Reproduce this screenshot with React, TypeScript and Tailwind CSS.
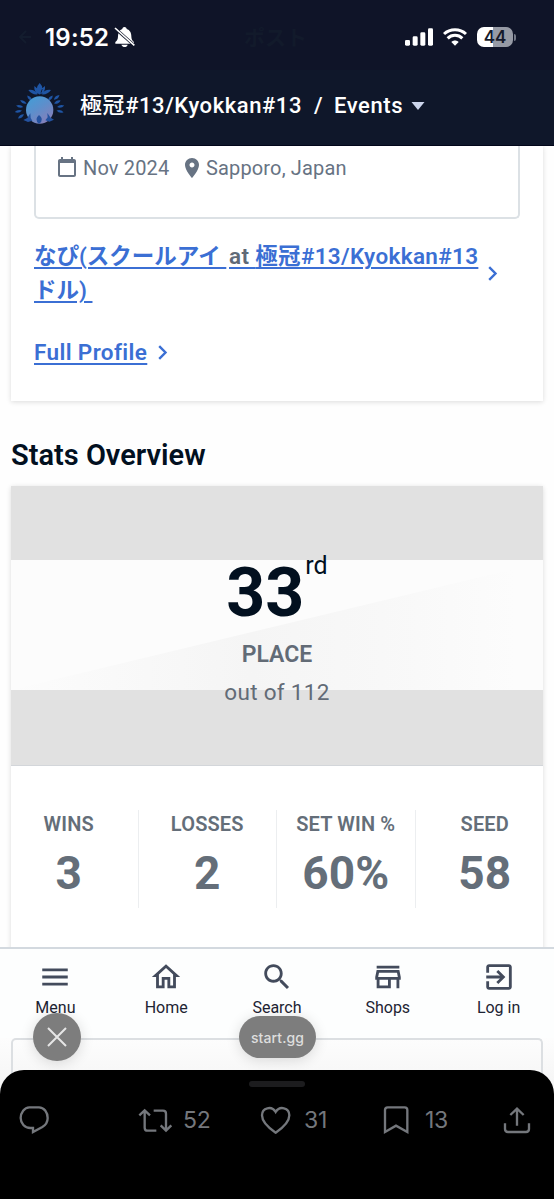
import React from 'react';

interface Stat {
  label: string;
  value: string;
}

interface NavItem {
  label: string;
  path: string;
}

const stats: Stat[] = [
  { label: 'WINS', value: '3' },
  { label: 'LOSSES', value: '2' },
  { label: 'SET WIN %', value: '60%' },
  { label: 'SEED', value: '58' },
];

const navItems: NavItem[] = [
  { label: 'Menu', path: 'M3 18h18v-2H3v2zm0-5h18v-2H3v2zm0-7v2h18V6H3z' },
  { label: 'Home', path: 'M12 5.69l5 4.5V18h-2v-6H9v6H7v-7.81l5-4.5M12 3L2 12h3v8h6v-6h2v6h6v-8h3L12 3z' },
  {
    label: 'Search',
    path: 'M15.5 14h-.79l-.28-.27C15.41 12.59 16 11.11 16 9.5 16 5.91 13.09 3 9.5 3S3 5.91 3 9.5 5.91 16 9.5 16c1.61 0 3.09-.59 4.23-1.57l.27.28v.79l5 4.99L20.49 19l-4.99-5zm-6 0C7.01 14 5 11.99 5 9.5S7.01 5 9.5 5 14 7.01 14 9.5 11.99 14 9.5 14z',
  },
  {
    label: 'Shops',
    path: 'M18.36 9l.6 3H5.04l.6-3h12.72M20 4H4v2h16V4zm0 3H4l-1 5v2h1v6h10v-6h4v6h2v-6h1v-2l-1-5zM6 18v-4h6v4H6z',
  },
  {
    label: 'Log in',
    path: 'M10.09 15.59L11.5 17l5-5-5-5-1.41 1.41L12.67 11H3v2h9.67l-2.58 2.59zM19 3H5c-1.11 0-2 .9-2 2v4h2V5h14v14H5v-4H3v4c0 1.1.89 2 2 2h14c1.1 0 2-.9 2-2V5c0-1.1-.9-2-2-2z',
  },
];

// x, y and tilt of each leaf around the orb
const leaves = [
  [65, 67, 48],
  [46, 78, 28],
  [35, 91, 12],
  [31, 106, -12],
  [39, 121, -35],
  [127, 67, -48],
  [146, 64, -40],
  [148, 78, -26],
  [158, 91, -12],
  [156, 106, 14],
];

const StatusBar: React.FC = () => (
  <div className="flex h-[70px] shrink-0 items-center bg-[#0f1428] pt-1 text-white">
    <svg className="ml-[17px] h-4 w-[14px]" viewBox="0 0 14 16" fill="none" stroke="#131c2e" strokeWidth="2">
      <path d="M9 2L3 8l6 6M3 8h11" />
    </svg>
    <span className="ml-[14px] w-[69px] pt-px font-['Inter',sans-serif] text-[24px] font-semibold tracking-[0.2px]">19:52</span>
    {/* Silent mode bell */}
    <svg className="h-[22px] w-[21px]" viewBox="0 0 63 66">
      <path
        fill="#fff"
        d="M31 3c5 0 7 3 7 6 10 3 14 12 14 22 0 9 3 13 8 17v5H4v-5c5-4 8-8 8-17 0-10 4-19 13-22 0-3 2-6 6-6zM22 56h19c-1 5-5 7-9 7s-8-2-10-7z"
      />
      <path stroke="#0f1428" strokeWidth="9" d="M4 8l57 50" />
      <path stroke="#fff" strokeWidth="5" d="M3 6l58 52" />
    </svg>
    <span className="ml-[109px] w-[66px] font-['Noto_Sans_CJK_JP',sans-serif] text-[21px] font-bold text-[#121a2b]">ポスト</span>
    <svg className="ml-[95px] h-[18px] w-7" viewBox="0 0 84 54" fill="#fff">
      <rect x="0" y="36" width="15" height="17" rx="4" />
      <rect x="23" y="25" width="15" height="28" rx="4" />
      <rect x="46" y="13" width="15" height="40" rx="4" />
      <rect x="69" y="1" width="15" height="52" rx="4" />
    </svg>
    <svg className="ml-[10px] h-[18px] w-6" viewBox="0 0 72 54" fill="none" stroke="#fff" strokeWidth="9">
      <path d="M3 18c18-17 48-17 66 0" />
      <path d="M14 31c12-12 32-12 44 0" />
      <path d="M25 42c6-6 16-6 22 0L36 53z" fill="#fff" stroke="none" />
    </svg>
    <div className="ml-[10px] flex h-5 w-9 items-center justify-center rounded-[7px] bg-[linear-gradient(90deg,#fff_44%,#969aa5_44%)] pt-px font-['Inter',sans-serif] text-[17px] font-semibold text-[#14192b]">
      44
    </div>
    <div className="ml-px h-[7px] w-[2px] rounded-r-full bg-[#747987]" />
  </div>
);

const TournamentLogo: React.FC = () => (
  <svg className="-mt-[5px] -ml-1 h-[54px] w-16" viewBox="0 0 192 162">
    <defs>
      <linearGradient id="orb" x1="0" y1="0" x2="0.7" y2="1">
        <stop offset="0" stopColor="#3f9fd8" />
        <stop offset="0.5" stopColor="#5c8fcc" />
        <stop offset="1" stopColor="#867fb9" />
      </linearGradient>
    </defs>
    <g fill="#1f55a4">
      {leaves.map(([x, y, tilt]) => (
        <path key={`${x}-${y}`} transform={`translate(${x} ${y}) rotate(${tilt})`} d="M-11 0Q0-8 11 0Q0 8-11 0z" />
      ))}
      <path d="M95 21q17 17 0 35q-17-18 0-35zM79 30q13 8 13 25q-15-8-13-25zM111 30q-13 8-13 25q15-8 13-25zM61 42q18-3 28 13q-17 2-28-13zM129 42q-18-3-28 13q17 2 28-13z" />
    </g>
    <circle cx="95" cy="102" r="41" fill="url(#orb)" />
    <path fill="#24529f" d="M93 117q18 14 0 26q-16-12 0-26zM67 112l1 14 5 8-13 4-14-6 12-6zM118 111l1 13-7 9 12 4 14-6-10-6z" />
  </svg>
);

const AppHeader: React.FC = () => (
  <header className="flex h-[76px] shrink-0 items-center border-b border-[#02061a] bg-[#0f172a] pb-1 pl-[12px] font-['Roboto','Noto_Sans_CJK_JP',sans-serif] text-[22px] font-medium text-white">
    <TournamentLogo />
    <span className="ml-[8px] w-[222px] whitespace-nowrap tracking-[0.58px]">極冠#13/Kyokkan#13</span>
    <span className="ml-[12px] w-[20px]">/</span>
    <span className="w-[77px] tracking-[0.6px]">Events</span>
    <svg className="h-[8px] w-[14px]" viewBox="0 0 14 8" fill="#ccd5ec">
      <path d="M.5 0h13L7 8z" />
    </svg>
  </header>
);

const Chevron: React.FC = () => (
  <svg className="h-[15px] w-[10px] shrink-0" viewBox="0 0 10 15" fill="none" stroke="#3b6fd4" strokeWidth="2.4">
    <path d="M1.2 1.2l6.3 6.3-6.3 6.3" />
  </svg>
);

const ProfileCard: React.FC = () => (
  <section className="h-[255px] bg-white px-[23px] shadow-[0_1px_5px_rgba(0,0,0,0.14)]">
    <div className="flex h-[73px] items-start rounded-b-[5px] border-2 border-t-0 border-[#dce1e5] pl-[21px] pt-[7px] text-[20px] leading-[30px] text-[#677383]">
      <svg className="ml-px mt-[4px] h-[20px] w-[18px]" viewBox="0 0 18 20" fill="#677383">
        <path d="M16 2h-1V0h-2v2H5V0H3v2H2C.9 2 0 2.9 0 4v14c0 1.1.9 2 2 2h14c1.1 0 2-.9 2-2V4c0-1.1-.9-2-2-2zm0 16H2V6h14v12z" />
      </svg>
      <span className="ml-[7px] w-[102px] whitespace-nowrap tracking-[0.15px]">Nov 2024</span>
      <svg className="mt-[5px] h-[20px] w-[14px]" viewBox="5 2 14 20" fill="#677383">
        <path d="M12 2C8.13 2 5 5.13 5 9c0 5.25 7 13 7 13s7-7.75 7-13c0-3.87-3.13-7-7-7zm0 9.5c-1.38 0-2.5-1.12-2.5-2.5s1.12-2.5 2.5-2.5 2.5 1.12 2.5 2.5-1.12 2.5-2.5 2.5z" />
      </svg>
      <span className="ml-[7px] whitespace-nowrap tracking-[0.15px]">Sapporo, Japan</span>
    </div>

    <div className="mt-[20px] flex items-center text-[22.5px] font-semibold leading-[34px] text-[#3b6fd4]">
      <div className="flex items-start whitespace-pre">
        <a className="w-[195px] underline decoration-[1.5px] underline-offset-[3px]">
          {'なぴ(スクールアイ '}
          <br />
          {'ドル)\u00a0'}
        </a>
        <a className="tracking-[0.33px] underline decoration-[1.5px] underline-offset-[3px]">
          <span className="text-[#606a77]">at </span>
          極冠#13/Kyokkan#13
        </a>
      </div>
      <span className="ml-[10px]">
        <Chevron />
      </span>
    </div>

    <div className="mt-[28px] flex items-center gap-[11px] text-[22.5px] font-semibold leading-[34px] text-[#3b6fd4]">
      <a className="tracking-[0.38px] underline decoration-[1.5px] underline-offset-[3px]">Full Profile</a>
      <Chevron />
    </div>
  </section>
);

const Placement: React.FC = () => (
  <div className="grid h-[280px] border-b border-[#d3d6da] bg-[#e1e1e1]">
    {/* Banner strip behind the placing */}
    <svg className="col-start-1 row-start-1 mt-[74px] h-[130px] w-full" viewBox="0 0 532 130" preserveAspectRatio="none">
      <defs>
        <linearGradient id="sweep" x1="0" y1="0" x2="1" y2="0">
          <stop offset="0" stopColor="#fcfcfc" />
          <stop offset="0.45" stopColor="#f5f5f5" />
          <stop offset="0.7" stopColor="#f8f8f8" />
          <stop offset="0.95" stopColor="#fcfcfc" />
        </linearGradient>
      </defs>
      <rect width="532" height="130" fill="#fcfcfc" />
      <path d="M0 130L532 2V130z" fill="url(#sweep)" />
    </svg>
    <div className="col-start-1 row-start-1 flex flex-col items-center pt-[66px] text-[#626b76]">
      <div className="flex items-start text-[#02101f]">
        <span className="mt-[3px] text-[68px] font-bold leading-[76px]">33</span>
        <span className="ml-[1px] text-[25px] leading-[28px]">rd</span>
      </div>
      <span className="mt-[8px] text-[23px] font-semibold leading-[32px]">PLACE</span>
      <span className="mt-[5px] text-[22.5px] leading-[32px] tracking-[0.3px]">out of 112</span>
    </div>
  </div>
);

const StatsCard: React.FC = () => (
  <section className="mt-[13px] h-[520px] bg-white shadow-[0_1px_5px_rgba(0,0,0,0.14)]">
    <Placement />
    <div className="-mx-[11px] mt-[44px] grid grid-cols-4 divide-x divide-[#eceef0] text-center text-[#646e79]">
      {stats.map((stat) => (
        <div key={stat.label} className="h-[98px]">
          <div className="whitespace-nowrap text-[20px] font-semibold leading-[28px] tracking-[0.15px]">{stat.label}</div>
          <div className="mt-[8px] text-[46px] font-bold leading-[54px]">{stat.value}</div>
        </div>
      ))}
    </div>
  </section>
);

const BottomNav: React.FC = () => (
  <nav className="grid h-[91px] shrink-0 grid-cols-5 border-t-2 border-[#d3d9df] bg-[#fdfefe]">
    {navItems.map((item) => (
      <a key={item.label} className="flex flex-col items-center pt-[11px] text-[16px] text-[#1d2433]">
        <svg className="h-[34px] w-[34px]" viewBox="0 0 24 24" fill="#434b5c">
          <path d={item.path} />
        </svg>
        <span className="mt-[2px] leading-[24px]">{item.label}</span>
      </a>
    ))}
  </nav>
);

const actionIcon = 'shrink-0 fill-none stroke-[#74777c] stroke-[7]';

const PostActions: React.FC = () => (
  <footer className="h-[129px] rounded-t-[24px] bg-black pt-[11px] font-['Inter',sans-serif] text-[23px] leading-[30px] text-[#74777c]">
    <div className="mx-auto h-[6px] w-14 rounded-full bg-[#1c1c1e]" />
    <div className="mt-[17px] grid grid-cols-[119px_122px_123px_120px_1fr] items-center pl-[19px]">
      <svg className={`${actionIcon} h-[30px] w-[31px]`} viewBox="57 132 93 90">
        <path d="M88 139h29c15 0 26 15 26 32 0 12-6 21-16 27l-28 15v-12h-8c-17 0-29-14-29-30s11-32 26-32z" />
      </svg>
      <div className="flex items-center">
        <svg className={`${actionIcon} h-[30px] w-[35px]`} viewBox="413 132 105 90">
          <path d="M417 163l16-15 16 15M433 149v51q0 9 9 9h26M460 149h28q9 0 9 9v50M481 193l16 16 16-16" />
        </svg>
        <span className="ml-[10px] pt-px tracking-[-0.3px]">52</span>
      </div>
      <div className="flex items-center">
        <svg className={`${actionIcon} h-[30px] w-[31px]`} viewBox="780 132 93 90">
          <path d="M827 215C800 197 786 180 786 163c0-23 29-30 41-10 12-20 41-13 41 10 0 17-14 34-41 52z" />
        </svg>
        <span className="ml-[13px] pt-px tracking-[-0.3px]">31</span>
      </div>
      <div className="flex items-center">
        <svg className={`${actionIcon} h-[30px] w-[26px]`} viewBox="319 132 78 90">
          <path d="M325 213v-66q0-8 8-8h51q8 0 8 8v66l-34-19z" />
        </svg>
        <span className="ml-[16px] pt-px tracking-[-0.3px]">13</span>
      </div>
      <svg className={`${actionIcon} h-[30px] w-[28px]`} viewBox="678 132 84 90">
        <path d="M700 162l20-19 20 19M720 143v51M684 187v17q0 9 9 9h54q9 0 9-9v-17" />
      </svg>
    </div>
  </footer>
);

const App: React.FC = () => {
  return (
    <div className="relative flex h-[1199px] w-[554px] flex-col overflow-hidden bg-[#fefefe] font-['Roboto','Noto_Sans_CJK_JP',sans-serif]">
      <StatusBar />
      <AppHeader />
      <main className="h-[801px] shrink-0 overflow-hidden px-[11px]">
        <ProfileCard />
        <h2 className="mt-[36px] text-[29px] font-semibold leading-[36px] text-[#02101f]">Stats Overview</h2>
        <StatsCard />
      </main>
      <BottomNav />
      {/* Top edge of the page content that scrolls under the sheet */}
      <div className="-mb-6 h-[56px] shrink-0 bg-gradient-to-b from-[#fdfdfd] to-[#f4f4f4] px-[11px]">
        <div className="h-full rounded-t-[5px] border-2 border-b-0 border-[#dcdfe2]" />
      </div>
      <div className="relative">
        <PostActions />
      </div>

      {/* Floating browser controls */}
      <button className="absolute left-[33px] top-[1013px] flex h-12 w-12 items-center justify-center rounded-full bg-[#7d7d7d] shadow-[0_2px_14px_rgba(0,0,0,0.14)]">
        <svg className="h-5 w-5" viewBox="0 0 20 20" stroke="#e6e6e6" strokeWidth="2">
          <path d="M1 1l18 18M19 1L1 19" />
        </svg>
      </button>
      <div className="absolute left-[239px] top-[1016px] flex h-[42px] w-[77px] items-center justify-center rounded-full bg-[#7d7d7d] font-['Inter',sans-serif] text-[14px] font-medium tracking-[0.1px] text-[#dedede] shadow-[0_2px_14px_rgba(0,0,0,0.14)]">
        start.gg
      </div>
    </div>
  );
};

export default App;
